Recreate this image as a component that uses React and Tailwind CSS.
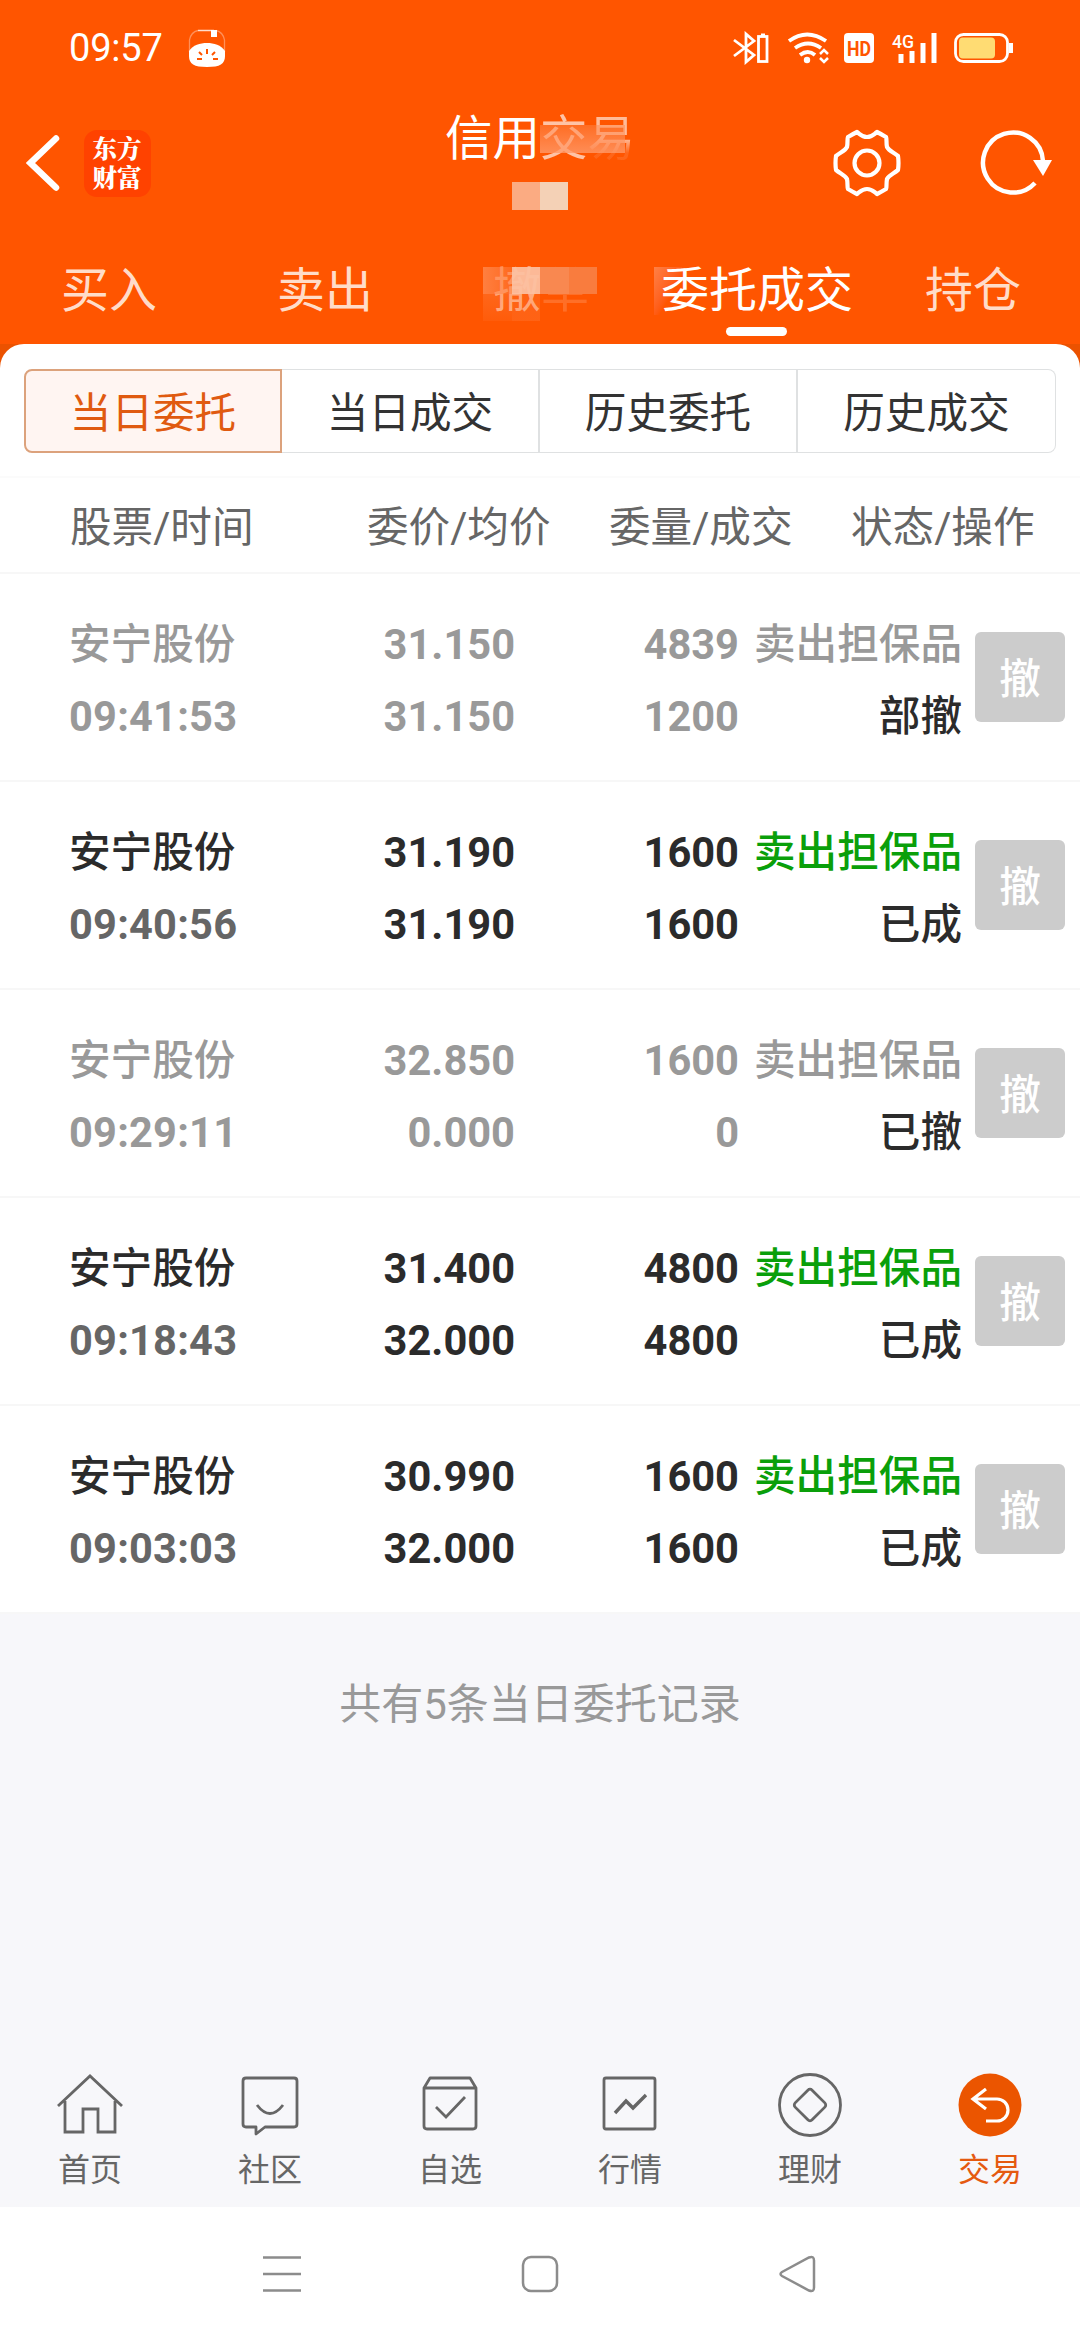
import React from "react";

const tabs = ["买入", "卖出", "撤单", "委托成交", "持仓"];
const segments = ["当日委托", "当日成交", "历史委托", "历史成交"];

const orders = [
  { time: "09:41:53", price: "31.150", avg: "31.150", qty: "4839", done: "1200", status: "部撤", muted: true },
  { time: "09:40:56", price: "31.190", avg: "31.190", qty: "1600", done: "1600", status: "已成" },
  { time: "09:29:11", price: "32.850", avg: "0.000", qty: "1600", done: "0", status: "已撤", muted: true },
  { time: "09:18:43", price: "31.400", avg: "32.000", qty: "4800", done: "4800", status: "已成" },
  { time: "09:03:03", price: "30.990", avg: "32.000", qty: "1600", done: "1600", status: "已成" },
];

function StatusBar() {
  return (
    <div className="h-24 flex items-center pl-[69px] pr-[67px]">
      <span className="text-[38px] leading-none tracking-[-0.2px] w-[119px]">09:57</span>
      <svg width="38" height="40" viewBox="0 0 38 40" className="block">
        <path d="M10 2.500h16" stroke="#fff" strokeWidth="1.500" opacity="0.8" />
        <path d="M1.500 12v12M36.500 12v12M10 2.500Q3 4 1.500 12M28 2.500Q35 4 36.500 12" stroke="#fff" strokeWidth="1.300" opacity="0.35" fill="none" />
        <rect x="23" y="2" width="6" height="7" fill="#fff" />
        <path d="M1 23C5 17 12 15 19 15s14 2 18 8v5c0 8-5 11-18 11S1 36 1 28z" fill="#fff" />
        <path d="M19 21v5M11 24l3 3M27 24l-3 3M9 31h5M25 31h5" stroke="#ff5500" strokeWidth="2" />
      </svg>
      <div className="flex-1" />
      <svg width="280" height="34" viewBox="732 31 280 34" fill="none" className="block">
        <path d="M733 40l20 15-8 7V34l8 7-20 15" stroke="#fff" strokeWidth="2.800" />
        <rect x="757.500" y="36.500" width="8.500" height="25" stroke="#fff" strokeWidth="2.800" />
        <path d="M762 33.500v3" stroke="#fff" strokeWidth="4" />
        <path d="M788 41q18-13 37 0M794 48q13-9 26 0M799 55q8-6 15 0" stroke="#fff" strokeWidth="3.800" />
        <circle cx="806" cy="60" r="3.200" fill="#fff" />
        <path d="M819 54l4-4 4 4M819 58l4 4 4-4" stroke="#fff" strokeWidth="2.500" />
        <rect x="843" y="33" width="30" height="30" rx="4" fill="#fff" />
        <text x="858" y="55.500" textAnchor="middle" fontSize="20" fontWeight="700" fill="#ff5500" textLength="24" lengthAdjust="spacingAndGlyphs">HD</text>
        <text x="891" y="47.500" fontSize="19" fontWeight="500" fill="#fff" textLength="22" lengthAdjust="spacingAndGlyphs">4G</text>
        <path d="M900 54v9M911 51v12M922 43v20M933 33v30" stroke="#fff" strokeWidth="5" />
        <rect x="954.500" y="34.500" width="52" height="27" rx="8" stroke="#fff" strokeWidth="2.800" />
        <rect x="958" y="37.500" width="36" height="21" rx="4" fill="#ffdc73" />
        <path d="M1010 43v10" stroke="#fff" strokeWidth="4" />
      </svg>
    </div>
  );
}

function TitleBar() {
  return (
    <div className="h-[134px] flex items-start px-[26px]">
      <svg width="34" height="58" viewBox="0 0 34 58" fill="none" className="mt-[38px]">
        <path d="M30 4.500L4.500 29 30 53.500" stroke="#fff" strokeWidth="6.500" strokeLinecap="round" />
      </svg>
      <div className="w-[67px] h-[67px] ml-[24px] mt-[34px] rounded-[13px] bg-[#ff4200] flex items-center justify-center">
        <p className="w-[50px] pb-[3px] font-['Noto_Serif_CJK_SC','Noto_Sans_CJK_SC',serif] font-black text-[24.500px] leading-[29px] break-all">
          东方财富
        </p>
      </div>
      <div className="relative ml-[293px] mt-[13px] h-[102px] w-[194px]">
        <div className="pl-px text-[47.500px] leading-[60px] whitespace-nowrap">
          信用<span className="opacity-65">交</span>
          <span className="bg-gradient-to-b from-white/60 from-50% to-white/10 to-75% bg-clip-text text-transparent">易</span>
        </div>
        <div className="absolute left-[96px] top-[16px] w-[85px] h-[28px] bg-gradient-to-b from-[#ff8547]/50 to-[#ff9b6b]/80" />
        <div className="absolute left-[68px] top-[73px] flex">
          <div className="w-7 h-7 bg-[#fbab82]" />
          <div className="w-7 h-7 bg-[#f4d1b6]" />
        </div>
      </div>
      <div className="flex-1" />
      <svg width="68" height="68" viewBox="-34 -34 68 68" fill="none" stroke="#fff" strokeWidth="4.200" strokeLinejoin="round" className="mt-[33px]">
        <path d="M-10-31Q-14-29-19-26C-20-24-19-21-20-16C-22-12-26-11-31-7Q-32 0-31 7C-26 11-22 12-20 16C-19 21-20 24-19 26Q-14 29-10 31C-6 28-5 26 0 26S6 28 10 31Q14 29 19 26C20 24 19 21 20 16C22 12 26 11 31 7Q32 0 31-7C26-11 22-12 20-16C19-21 20-24 19-26Q14-29 10-31C6-28 5-26 0-26S-6-28-10-31Z" />
        <circle r="12.500" />
      </svg>
      <svg width="76" height="68" viewBox="-34 -34 76 68" fill="none" className="ml-[78px] mr-[-1px] mt-[33px]">
        <path d="M22 20A30 30 0 1 1 30-2" stroke="#fff" strokeWidth="4.500" />
        <path d="M20-3h19L30 13z" fill="#fff" />
      </svg>
    </div>
  );
}

function Tabs() {
  return (
    <div className="h-[114px] grid grid-cols-5">
      {tabs.map((tab) => {
        const active = tab === "委托成交";
        const masked = tab === "撤单";
        return (
          <div key={tab} className="relative flex flex-col items-center pt-[31px]">
            {active && <span className="absolute left-[6px] top-[37px] w-7 h-12 bg-gradient-to-br from-[#ff8045] to-[#ff5500] to-60%" />}
            <span
              className={
                "relative left-px text-[48px] leading-[60px] whitespace-nowrap " +
                (active ? "text-white" : masked ? "text-[#ffd9c4]/80" : "text-[#ffdcc9]")
              }
            >
              {masked ? (
                <>
                  撤<span className="opacity-25">单</span>
                </>
              ) : (
                tab
              )}
            </span>
            {active && <span className="mt-[6px] w-[61px] h-[9px] rounded-full bg-white" />}
            {masked && (
              <div className="absolute left-[51px] top-[37px] grid grid-cols-4 w-[114px]">
                <span className="h-[27px] bg-gradient-to-r from-[#ff8a50]/80 to-[#ff7733]/60" />
                <span className="h-[27px] bg-[#fcbf9f]/95" />
                <span className="h-[27px] bg-[#f98850]" />
                <span className="h-[27px] bg-[#f97c3e]" />
                <span className="h-[27px] bg-gradient-to-b from-[#ff8040]/40 to-[#ff7733]/20" />
                <span className="h-[27px] bg-gradient-to-b from-[#ff8040]/30 to-[#ff7733]/40" />
              </div>
            )}
          </div>
        );
      })}
    </div>
  );
}

function Segments() {
  return (
    <div className="grid grid-cols-4 mx-6 h-[84px] text-[41.600px] text-[#333]">
      {segments.map((s, i) => (
        <div
          key={s}
          className={
            "flex items-center justify-center pt-[6px] " +
            (i === 0
              ? "border-2 border-[#dca27c] rounded-l-lg bg-[#fff5f2] text-[#e05a10]"
              : "border-y border-r-2 border-[#dfe1e2] last:rounded-r-lg last:border-r")
          }
        >
          {s}
        </div>
      ))}
    </div>
  );
}

function TableHead() {
  return (
    <div className="flex h-[98px] mt-[23px] pt-[6px] border-y-2 border-t-[#fbfbfb] border-b-[#f7f7f7] items-center text-[41.600px] text-[#666] pl-[70px] whitespace-nowrap">
      <span className="w-[297px]">股票/时间</span>
      <span className="w-[242px]">委价/均价</span>
      <span className="w-[242px]">委量/成交</span>
      <span>状态/操作</span>
    </div>
  );
}

function OrderRow({ order }) {
  const main = order.muted ? "text-[#999]" : "text-[#2b2b2b]";
  return (
    <div className="h-52 border-b-2 border-[#f7f7f7] flex items-center pl-[69px] pr-[15px] text-[41.600px] leading-[72px] font-bold whitespace-nowrap">
      <div className="w-[190px] pt-[7px]">
        <p className={"font-medium " + main}>安宁股份</p>
        <p className={"tracking-[0.2px] " + (order.muted ? "text-[#999]" : "text-[#666]")}>{order.time}</p>
      </div>
      <div className={"w-[256px] pt-[7px] text-right " + main}>
        <p>{order.price}</p>
        <p>{order.avg}</p>
      </div>
      <div className={"w-[224px] pt-[7px] text-right " + main}>
        <p>{order.qty}</p>
        <p>{order.done}</p>
      </div>
      <div className="w-[223px] pt-[7px] text-right font-medium">
        <p className={order.muted ? "text-[#999]" : "text-[#0a9f0a]"}>卖出担保品</p>
        <p className="text-[#2b2b2b]">{order.status}</p>
      </div>
      <button className="ml-auto w-[90px] h-[90px] pt-[5px] rounded-md bg-[#ccc] text-white font-medium">撤</button>
    </div>
  );
}

function NavIcon({ name }) {
  return (
    <svg width="68" height="68" viewBox="-34 -34 68 68" fill="none" stroke="#666" strokeWidth="2.800" className="block">
      {name === "首页" && <path d="M-32 1L0-29 32 1M-25-4V27H-7V4H8V27H25V-4" />}
      {name === "社区" && (
        <>
          <path d="M-27-24q0-3 3-3H24q3 0 3 3V19q0 3-3 3H-5L-14 29V22H-24q-3 0-3-3z" strokeLinejoin="round" />
          <path d="M-13 0Q0 17 13 0" />
        </>
      )}
      {name === "自选" && (
        <>
          <path d="M-26-17L-20-27H20L26-17V21q0 3-3 3H-23q-3 0-3-3zM-26-17H26" strokeLinejoin="round" />
          <path d="M-14 2L-4 12 15-8" />
        </>
      )}
      {name === "行情" && (
        <>
          <rect x="-26" y="-27" width="51" height="51" rx="2" />
          <path d="M-15 8L-4-4 3 3 16-10" strokeWidth="3.400" />
        </>
      )}
      {name === "理财" && (
        <>
          <circle r="30.500" />
          <rect x="-12" y="-12" width="24" height="24" rx="3" transform="rotate(45)" />
        </>
      )}
      {name === "交易" && (
        <>
          <circle r="31.500" fill="#eb5500" stroke="none" />
          <path d="M-4-16L-17-6-4 4M-17-6H7a11 11 0 0 1 0 22H-4" stroke="#fff" strokeWidth="3.200" />
        </>
      )}
    </svg>
  );
}

function BottomNav() {
  return (
    <div className="grid grid-cols-6 h-[136px]">
      {["首页", "社区", "自选", "行情", "理财", "交易"].map((name) => (
        <div key={name} className="flex flex-col items-center">
          <NavIcon name={name} />
          <span className={"text-[32px] leading-[40px] mt-[11px] " + (name === "交易" ? "text-[#e55a10]" : "text-[#666]")}>
            {name}
          </span>
        </div>
      ))}
    </div>
  );
}

function SystemNav() {
  return (
    <div className="h-[133px] bg-white flex justify-center items-center gap-[218px]">
      <svg width="40" height="40" viewBox="0 0 40 40" stroke="#8c8c8c" strokeWidth="2.500">
        <path d="M1 3.500H39M1 20H39M1 36.500H39" />
      </svg>
      <svg width="40" height="40" viewBox="0 0 40 40" fill="none" stroke="#8c8c8c" strokeWidth="2.500">
        <rect x="3" y="3" width="34" height="34" rx="8" />
      </svg>
      <svg width="40" height="40" viewBox="0 0 40 40" fill="none" stroke="#8c8c8c" strokeWidth="2.500">
        <path d="M4 18L31 3.500q5-2 5 3v27q0 5-5 3L4 22q-3-2 0-4z" />
      </svg>
    </div>
  );
}

export default function App() {
  return (
    <div className="w-[1080px] h-[2340px] flex flex-col overflow-hidden bg-[#f7f7fa] font-[Roboto,'Noto_Sans_CJK_SC',sans-serif]">
      <header className="bg-[#ff5500] text-white">
        <StatusBar />
        <TitleBar />
        <Tabs />
      </header>
      <main className="bg-[#eb5200]">
        <div className="bg-white rounded-t-[24px] pt-[25px]">
          <Segments />
          <TableHead />
          {orders.map((order) => (
            <OrderRow key={order.time} order={order} />
          ))}
        </div>
      </main>
      <p className="mt-[61px] text-center text-[42px] leading-[60px] text-[#999]">共有5条当日委托记录</p>
      <div className="flex-1" />
      <BottomNav />
      <SystemNav />
    </div>
  );
}
